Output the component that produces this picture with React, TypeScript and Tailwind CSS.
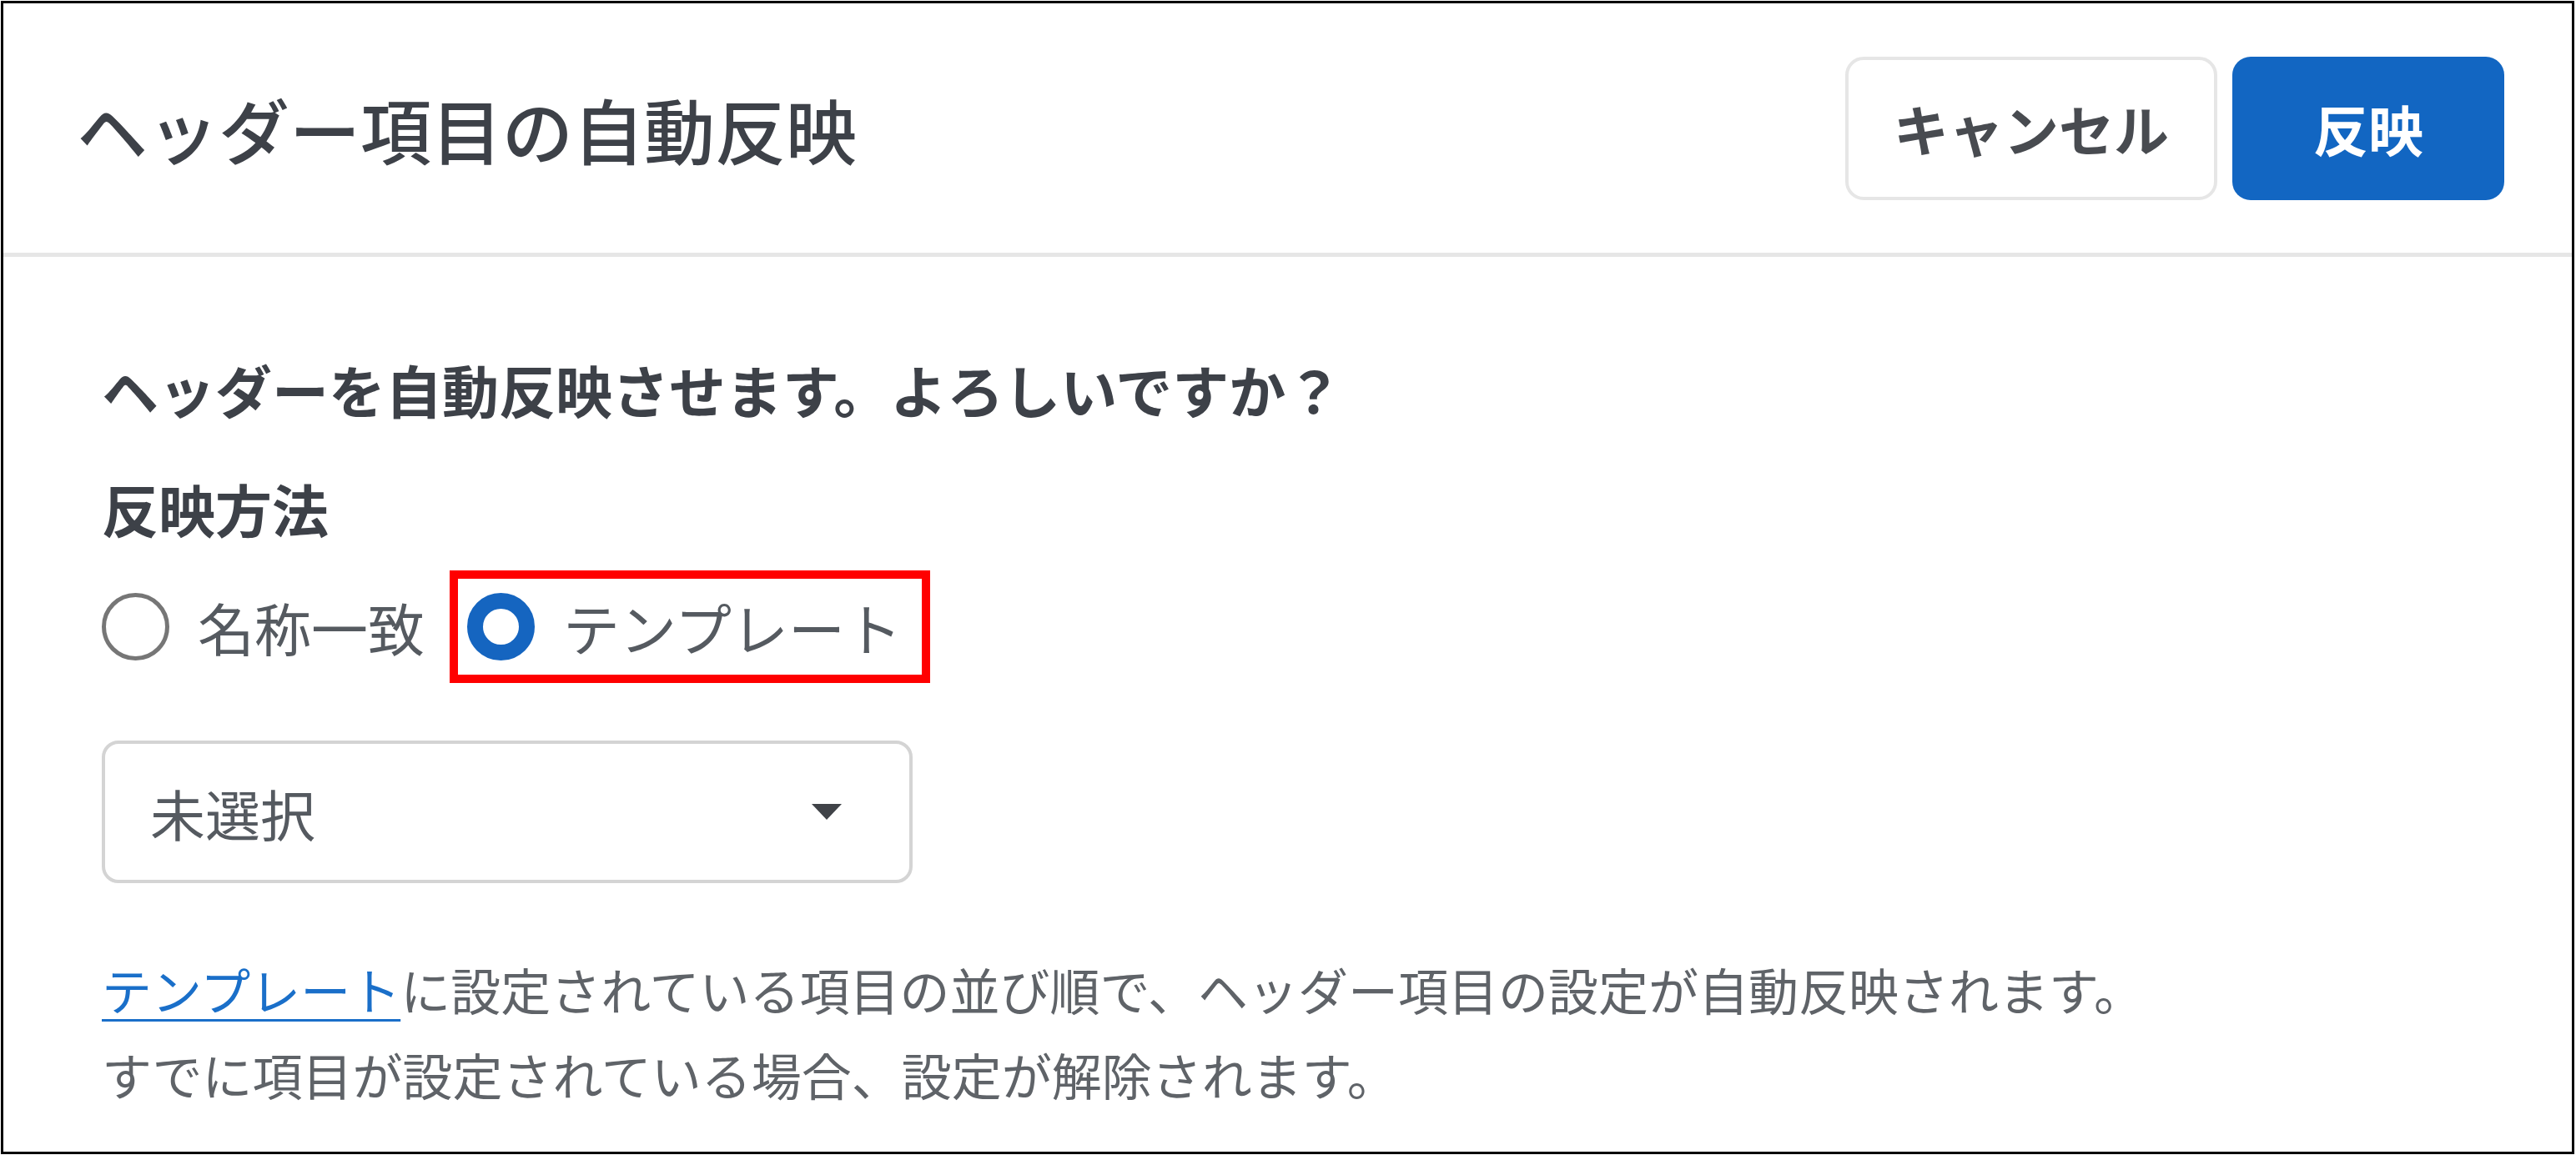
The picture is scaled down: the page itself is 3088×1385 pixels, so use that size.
import React from "react";

const font = { fontFamily: '"Noto Sans CJK JP", "Noto Sans", sans-serif' };

const RadioOption: React.FC<{ label: string; checked?: boolean }> = ({ label, checked }) => {
  return (
    <label className="flex items-center gap-[34px]">
      {checked ? (
        <span className="box-border block h-[81px] w-[81px] rounded-full border-[19px] border-[#1565c0] bg-white" />
      ) : (
        <span className="box-border block h-[81px] w-[81px] rounded-full border-[5px] border-[#767676] bg-white" />
      )}
      <span className="text-[68px] leading-[90px] text-[#555a60]">{label}</span>
    </label>
  );
};

export default function App() {
  return (
    <div className="h-[1385px] w-[3088px] bg-white p-px" style={font}>
      <div className="flex h-[1383px] w-[3085px] flex-col border-[3px] border-black bg-white">
        {/* header */}
        <div className="flex h-[299px] items-center justify-between pl-[88px] pr-[81px]">
          <h1 className="text-[85px] font-medium leading-[100px] text-[#3d4148]">
            ヘッダー項目の自動反映
          </h1>
          <div className="flex items-center gap-[18px]">
            <button className="box-border flex h-[172px] w-[446px] items-center justify-center rounded-[22px] border-[4px] border-[#e6e6e6] bg-white text-[66px] font-bold text-[#484b50]">
              キャンセル
            </button>
            <button className="box-border flex h-[172px] w-[326px] items-center justify-center rounded-[22px] bg-[#1266c2] text-[66px] font-bold text-white">
              反映
            </button>
          </div>
        </div>
        <div className="h-[5px] bg-[#e6e6e6]" />

        {/* body */}
        <div className="flex flex-col pl-[118px]">
          <p className="mt-[114px] text-[68px] font-bold leading-[90px] text-[#3d4148]">
            ヘッダーを自動反映させます。よろしいですか？
          </p>
          <p className="mt-[53px] text-[68px] font-bold leading-[90px] text-[#3d4148]">反映方法</p>

          <div className="mt-[29px] flex h-[135px] items-center">
            <RadioOption label="名称一致" />
            <div className="ml-[30px] flex h-[135px] items-center border-[10px] border-[#ff0000] pl-[11px] pr-[24px]">
              <RadioOption label="テンプレート" checked />
            </div>
          </div>

          <div className="mt-[69px] box-border flex h-[171px] w-[972px] items-center justify-between rounded-[20px] border-[4px] border-[#d4d4d4] pl-[54px] pr-[80px]">
            <span className="text-[66px] leading-[90px] text-[#555a60]">未選択</span>
            <svg width="38" height="21" viewBox="0 0 38 21">
              <path d="M1 1 L37 1 L19 20 Z" fill="#404348" />
            </svg>
          </div>

          <div className="mt-[76px] text-[60px] leading-[102px] text-[#5f6368]">
            <p>
              <a className="text-[#1a6fc9] underline decoration-[3px] underline-offset-[10px]">テンプレート</a>
              に設定されている項目の並び順で、ヘッダー項目の設定が自動反映されます。
            </p>
            <p>すでに項目が設定されている場合、設定が解除されます。</p>
          </div>
        </div>
      </div>
    </div>
  );
}
